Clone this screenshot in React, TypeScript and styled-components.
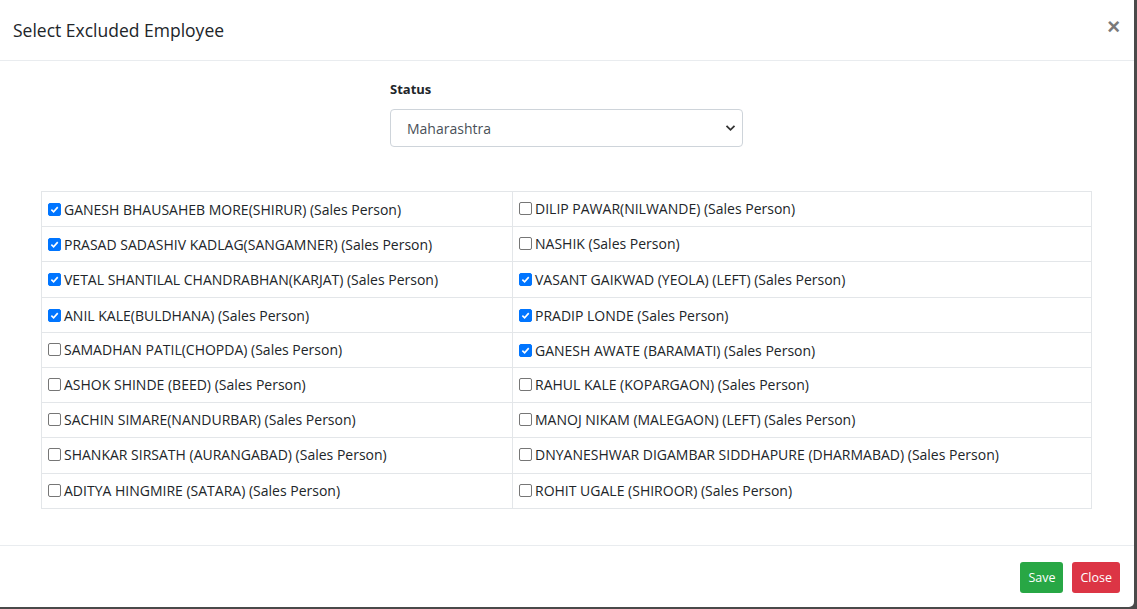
import React from "react";
import styled, { createGlobalStyle } from "styled-components";

const Global = createGlobalStyle`
  html, body { margin: 0; padding: 0; }
  body {
    background: #4a4a4a;
    font-family: "Segoe UI", "Open Sans", "Noto Sans", sans-serif;
    color: #212529;
  }
`;

const Modal = styled.div`
  width: 1134px;
  height: 607px;
  background: #fff;
  border-radius: 0 0 5px 0;
  display: flex;
  flex-direction: column;
  box-sizing: border-box;
`;

const Header = styled.div`
  height: 61px;
  box-sizing: border-box;
  border-bottom: 1px solid #e9ecef;
  display: flex;
  align-items: center;
  justify-content: space-between;
  padding: 0 14px 0 13px;
`;

const Title = styled.h5`
  margin: 0;
  font-size: 17.5px;
  font-weight: 400;
  color: #212529;
`;

const CloseX = styled.button`
  border: none;
  background: none;
  padding: 0;
  font-size: 22px;
  line-height: 1;
  font-weight: 700;
  color: #7a7a7a;
  cursor: pointer;
  font-family: "Liberation Sans", sans-serif;
  margin-top: -6px;
`;

const Body = styled.div`
  flex: 1;
  padding: 18px 43px 0 41px;
  display: flex;
  flex-direction: column;
`;

const FormGroup = styled.div`
  width: 353px;
  align-self: center;
  margin-left: 1px;
  display: flex;
  flex-direction: column;
`;

const Label = styled.label`
  font-size: 13px;
  font-weight: 700;
  margin-bottom: 10px;
  line-height: 20px;
`;

const SelectWrap = styled.div`
  position: relative;
  height: 38px;
  border: 1px solid #ced4da;
  border-radius: 4px;
  box-sizing: border-box;
  display: flex;
  align-items: center;
  padding: 0 16px;
  font-size: 14px;
  color: #495057;
`;

const Chevron = styled.svg`
  position: absolute;
  right: 6px;
  top: 14px;
`;

const Table = styled.table`
  margin-top: 44px;
  width: 1050px;
  border-collapse: collapse;
  font-size: 14px;
  table-layout: fixed;
`;

const Col = styled.col<{ $w: number }>`
  width: ${(p) => p.$w}px;
`;

const Cell = styled.td`
  border: 1px solid #e3e6e9;
  height: 34.2px;
  padding: 0 6px;
  white-space: nowrap;
  vertical-align: middle;
`;

const CheckLabel = styled.span`
  display: inline-flex;
  align-items: center;
  gap: 3px;
`;

const Box = styled.span<{ $checked: boolean }>`
  width: 13px;
  height: 13px;
  box-sizing: border-box;
  border-radius: 2px;
  border: 1px solid ${(p) => (p.$checked ? "#0075ff" : "#767676")};
  background: ${(p) => (p.$checked ? "#0075ff" : "#fff")};
  display: inline-flex;
  align-items: center;
  justify-content: center;
  flex: none;
`;

const Footer = styled.div`
  height: 62px;
  box-sizing: border-box;
  border-top: 1px solid #e9ecef;
  display: flex;
  align-items: center;
  justify-content: flex-end;
  gap: 9px;
  padding: 0 14px 0 0;
`;

const Btn = styled.button<{ $variant: "save" | "close" }>`
  height: 31px;
  border: none;
  border-radius: 3px;
  padding: 0 8px;
  font-size: 12.5px;
  font-family: inherit;
  color: #fff;
  background: ${(p) => (p.$variant === "save" ? "#28a745" : "#dc3545")};
  margin-top: 1px;
`;

type Emp = { name: string; checked: boolean };

const left: Emp[] = [
  { name: "GANESH BHAUSAHEB MORE(SHIRUR) (Sales Person)", checked: true },
  { name: "PRASAD SADASHIV KADLAG(SANGAMNER) (Sales Person)", checked: true },
  { name: "VETAL SHANTILAL CHANDRABHAN(KARJAT) (Sales Person)", checked: true },
  { name: "ANIL KALE(BULDHANA) (Sales Person)", checked: true },
  { name: "SAMADHAN PATIL(CHOPDA) (Sales Person)", checked: false },
  { name: "ASHOK SHINDE (BEED) (Sales Person)", checked: false },
  { name: "SACHIN SIMARE(NANDURBAR) (Sales Person)", checked: false },
  { name: "SHANKAR SIRSATH (AURANGABAD) (Sales Person)", checked: false },
  { name: "ADITYA HINGMIRE (SATARA) (Sales Person)", checked: false },
];

const right: Emp[] = [
  { name: "DILIP PAWAR(NILWANDE) (Sales Person)", checked: false },
  { name: "NASHIK (Sales Person)", checked: false },
  { name: "VASANT GAIKWAD (YEOLA) (LEFT) (Sales Person)", checked: true },
  { name: "PRADIP LONDE (Sales Person)", checked: true },
  { name: "GANESH AWATE (BARAMATI) (Sales Person)", checked: true },
  { name: "RAHUL KALE (KOPARGAON) (Sales Person)", checked: false },
  { name: "MANOJ NIKAM (MALEGAON) (LEFT) (Sales Person)", checked: false },
  { name: "DNYANESHWAR DIGAMBAR SIDDHAPURE (DHARMABAD) (Sales Person)", checked: false },
  { name: "ROHIT UGALE (SHIROOR) (Sales Person)", checked: false },
];

function Check({ emp }: { emp: Emp }) {
  return (
    <CheckLabel>
      <Box $checked={emp.checked}>
        {emp.checked && (
          <svg width="9" height="9" viewBox="0 0 10 10">
            <path d="M1.5 5.2 L4 7.6 L8.6 2.4" stroke="#fff" strokeWidth="1.8" fill="none" />
          </svg>
        )}
      </Box>
      {emp.name}
    </CheckLabel>
  );
}

export default function App() {
  return (
    <>
      <Global />
      <Modal>
        <Header>
          <Title>Select Excluded Employee</Title>
          <CloseX aria-label="Close">×</CloseX>
        </Header>
        <Body>
          <FormGroup>
            <Label>Status</Label>
            <SelectWrap>
              Maharashtra
              <Chevron width="11" height="8" viewBox="0 0 11 8">
                <path d="M1.5 1.8 L5.5 5.8 L9.5 1.8" stroke="#333" strokeWidth="1.8" fill="none" />
              </Chevron>
            </SelectWrap>
          </FormGroup>
          <Table>
            <colgroup>
              <Col $w={471} />
              <Col $w={579} />
            </colgroup>
            <tbody>
              {left.map((l, i) => (
                <tr key={i}>
                  <Cell><Check emp={l} /></Cell>
                  <Cell><Check emp={right[i]} /></Cell>
                </tr>
              ))}
            </tbody>
          </Table>
        </Body>
        <Footer>
          <Btn $variant="save">Save</Btn>
          <Btn $variant="close">Close</Btn>
        </Footer>
      </Modal>
    </>
  );
}
